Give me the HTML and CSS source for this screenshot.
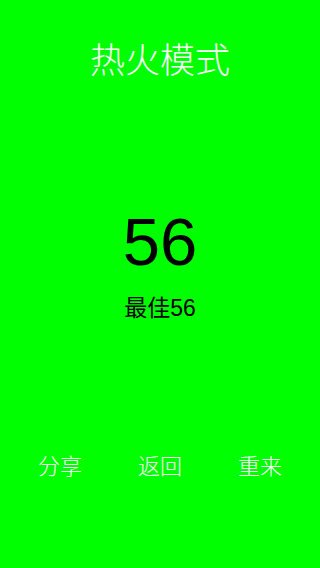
FILE: index.html
```html
<!DOCTYPE html>
<html lang="zh">
<head>
<meta charset="utf-8">
<meta name="viewport" content="width=device-width, initial-scale=1">
<title>热火模式</title>
<link rel="stylesheet" href="styles.css">
</head>
<body>
<main class="screen">
  <h1 class="title">热火模式</h1>
  <div class="score">56</div>
  <div class="best">最佳56</div>
  <nav class="actions">
    <span class="action">分享</span>
    <span class="action">返回</span>
    <span class="action">重来</span>
  </nav>
</main>
</body>
</html>
```

FILE: styles.css
```css
html, body {
  margin: 0;
  padding: 0;
  background: #00ff00;
}
.screen {
  width: 320px;
  height: 568px;
  display: flex;
  flex-direction: column;
  align-items: stretch;
  padding-top: 38px;
  box-sizing: border-box;
  font-family: "Liberation Sans", "Noto Sans CJK SC", sans-serif;
}
.title {
  margin: 0;
  font-size: 35px;
  line-height: 40px;
  font-weight: 300;
  color: #ffffff;
  text-align: center;
  font-family: "Noto Sans CJK SC", sans-serif;
}
.score {
  margin-top: 126px;
  font-size: 67px;
  line-height: 76px;
  color: #000000;
  text-align: center;
}
.best {
  margin-top: 14px;
  font-size: 23px;
  line-height: 28px;
  color: #000000;
  text-align: center;
}
.actions {
  margin-top: 127px;
  display: grid;
  grid-template-columns: repeat(3, 1fr);
  padding: 0 10px;
}
.action {
  font-size: 22px;
  line-height: 30px;
  font-weight: 300;
  color: #ffffff;
  text-align: center;
  font-family: "Noto Sans CJK SC", sans-serif;
}
```
